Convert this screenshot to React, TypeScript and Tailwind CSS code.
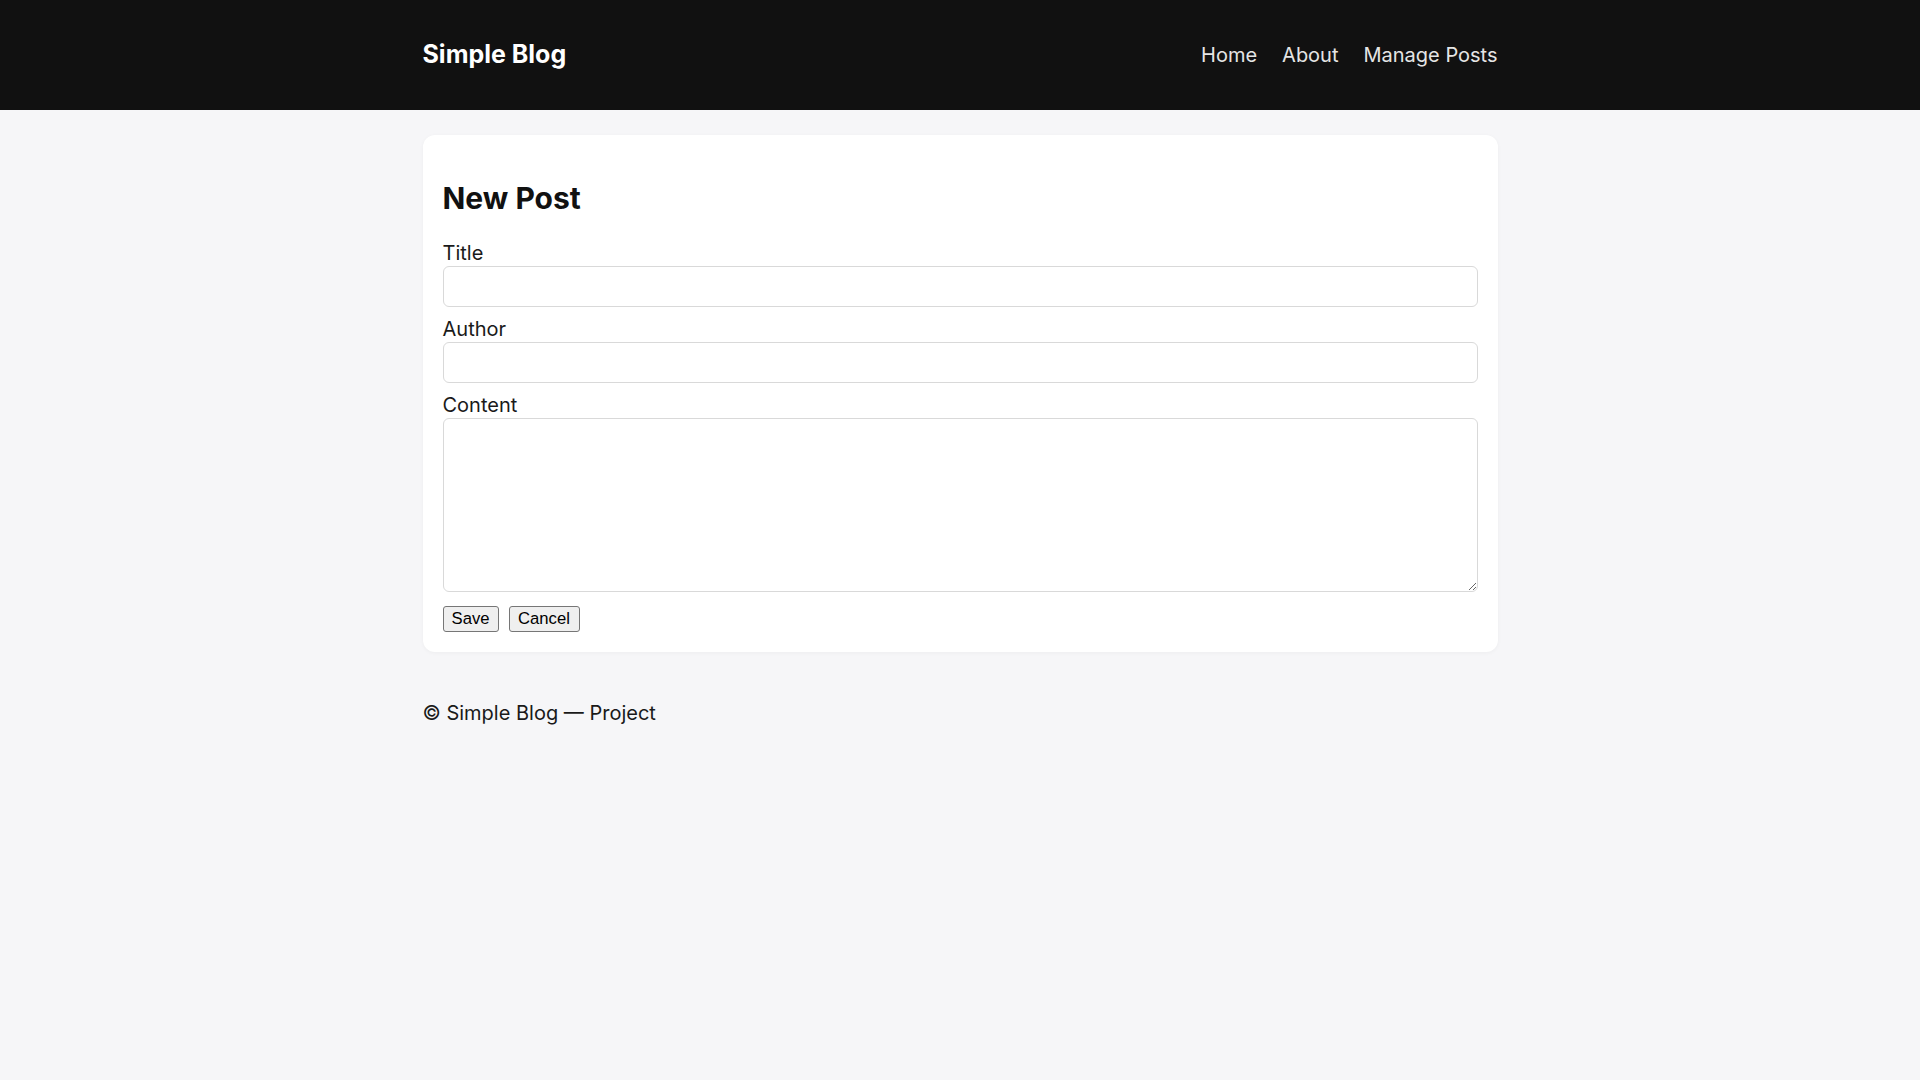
const NavLink = ({ label }: { label: string }) => (
  <a href="#" className="text-[20px] text-[#e5e5e5] ml-[25px] first:ml-0">
    {label}
  </a>
);

const Field = ({ label, area }: { label: string; area?: boolean }) => (
  <div>
    <label className="block text-[20px] leading-[24px] text-[#1a1a1a]">{label}</label>
    {area ? (
      <textarea className="block w-full h-[174px] mt-[1px] mb-[14px] border border-[#d9d9d9] rounded-[6px] bg-white p-2 outline-none" />
    ) : (
      <input
        type="text"
        className="block w-full h-[41px] mt-[1px] mb-[10px] border border-[#d9d9d9] rounded-[6px] bg-white px-2 outline-none"
      />
    )}
  </div>
);

export default function App() {
  return (
    <div className="min-h-screen bg-[#f6f6f8] font-['Inter',sans-serif] text-[#1a1a1a]">
      <header className="bg-[#111111]">
        <div className="max-w-[1075px] mx-auto h-[110px] flex items-center justify-between">
          <span className="text-[25px] font-bold text-white">Simple Blog</span>
          <nav className="flex items-center">
            <NavLink label="Home" />
            <NavLink label="About" />
            <NavLink label="Manage Posts" />
          </nav>
        </div>
      </header>

      <main className="max-w-[1075px] mx-auto pt-[25px]">
        <div className="bg-white rounded-[12px] p-[20px] shadow-[0_1px_4px_rgba(0,0,0,0.04)]">
          <h2 className="text-[30px] leading-[36px] font-bold text-[#111111] my-[25px]">New Post</h2>
          <form onSubmit={(e) => e.preventDefault()}>
            <Field label="Title" />
            <Field label="Author" />
            <Field label="Content" area />
            <div className="flex gap-[10px] font-['Liberation_Sans',Arial,sans-serif] text-[16.67px] leading-none text-black">
              <button className="h-[26px] w-[56px] bg-[#efefef] border border-[#767676] rounded-[3px]">Save</button>
              <button className="h-[26px] w-[71px] bg-[#efefef] border border-[#767676] rounded-[3px]">Cancel</button>
            </div>
          </form>
        </div>
        <footer className="pt-[49px] text-[20px] leading-[24px] text-[#1a1a1a]">© Simple Blog — Project</footer>
      </main>
    </div>
  );
}
